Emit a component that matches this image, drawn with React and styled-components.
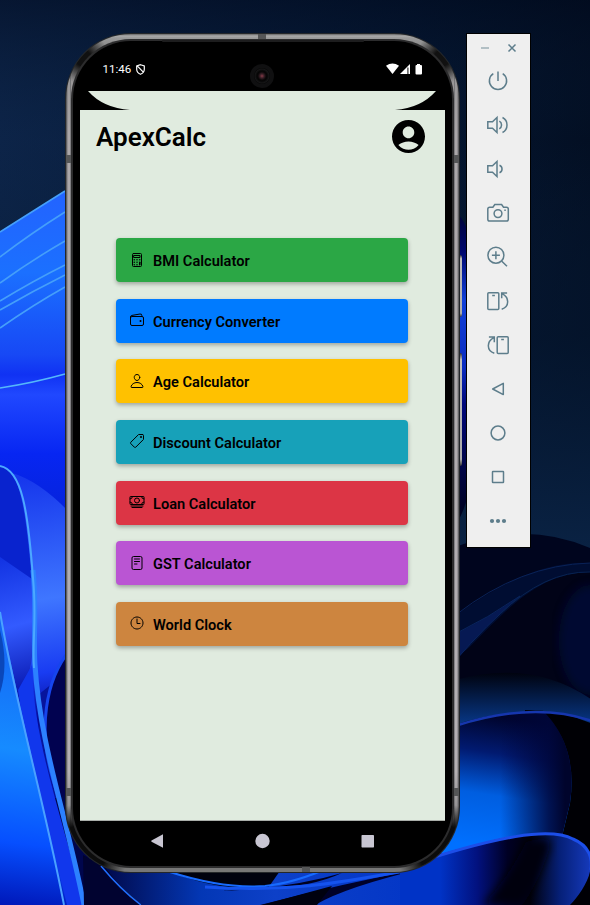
import React from "react";
import styled, { createGlobalStyle } from "styled-components";
import {
  IoCalculatorOutline,
  IoWalletOutline,
  IoPersonOutline,
  IoPricetagOutline,
  IoCashOutline,
  IoReaderOutline,
  IoTimeOutline,
} from "react-icons/io5";

const GlobalStyle = createGlobalStyle`
  * { box-sizing: border-box; }
  body { margin: 0; background: #03122a; font-family: Roboto, sans-serif; overflow: hidden; }
`;

const Desktop = styled.main`
  position: relative;
  isolation: isolate;
  width: 590px;
  height: 905px;
  overflow: hidden;
  display: flex;
  align-items: flex-start;
  padding: 33px 0 0 65px;
`;

const WallpaperArt = styled.svg`
  position: absolute;
  inset: 0;
  z-index: -1;
`;

const Phone = styled.section`
  position: relative;
  width: 395px;
  height: 840px;
  padding: 1px;
  border-radius: 66px;
  background: #24272a;
`;

const Metal = styled.div`
  height: 100%;
  padding: 5px 5px 4px;
  border-radius: 65px;
  background:
    radial-gradient(circle at 17px 24px, #111 8px, transparent 26px),
    radial-gradient(circle at 376px 24px, #111 8px, transparent 26px),
    radial-gradient(circle at 14px 818px, #0c0c0c 26px, transparent 48px),
    radial-gradient(circle at 379px 818px, #0c0c0c 26px, transparent 48px),
    linear-gradient(90deg, #4a4b4e 0, #4a4b4e88 1px, transparent 2px, transparent 4px, #55575a 5px, transparent 5px, transparent 388px, #55575a 388px, transparent 389px, transparent 391px, #4a4b4e88 392px, #4a4b4e 393px),
    linear-gradient(180deg, #666 0, #aaa 2px, #999 4px, #8d8d8d 1.5%, #aaa6a8 12%, #b4b0b3 88%, #777 96%, #777 100%);
`;

const Rim = styled.div`
  height: 100%;
  padding: 2px;
  border-radius: 60px;
  background: #2c2c2d;
`;

const Bezel = styled.div`
  height: 100%;
  padding: 0 7px;
  border-radius: 58px;
  background: #000;
  display: flex;
  flex-direction: column;
`;

const Antenna = styled.i`
  position: absolute;
  background: #555657;
  width: ${(p) => (p.$flat ? "8px" : "5px")};
  height: ${(p) => (p.$flat ? "5px" : "8px")};
  left: ${(p) => p.$x}px;
  top: ${(p) => p.$y}px;
`;

const SideButton = styled.i`
  position: absolute;
  left: 395px;
  top: ${(p) => p.$y}px;
  width: 2px;
  height: ${(p) => p.$h}px;
  border-radius: 0 2px 2px 0;
  background: linear-gradient(#333, #bbb 6%, #aaa 94%, #333);
`;

const Glint = styled.i`
  position: absolute;
  left: 97px;
  top: 7px;
  width: 202px;
  height: 2px;
  border-radius: 2px;
  background: #1d1d1e;
`;

const StatusBar = styled.header`
  height: 50px;
  flex: none;
  display: grid;
  grid-template-columns: 1fr 24px 1fr;
  align-items: center;
  color: #fff;
`;

const Clock = styled.div`
  display: flex;
  align-items: center;
  gap: 5px;
  padding: 6px 0 0 22.5px;
  font-size: 11.5px;
  line-height: 14px;
`;

const Camera = styled.i`
  width: 24px;
  height: 24px;
  margin: 19px 0 0 -0.5px;
  border-radius: 50%;
  border: 4px solid #101011;
  background: radial-gradient(circle, #8a3c48 0, #3c2028 2px, #0a0809 4px, #050505 5px, #161617 7px, #070707 8px);
`;

const Signals = styled.div`
  display: flex;
  justify-content: flex-end;
  padding: 5px 22px 0 0;
`;

const Screen = styled.div`
  flex: 1;
  display: flex;
  flex-direction: column;
  background: #e0ebdf;
  border-bottom: 1px solid #a9aea9;
`;

const ScreenCorners = styled.svg`
  display: block;
  flex: none;
`;

const TitleBar = styled.div`
  display: flex;
  justify-content: space-between;
  align-items: center;
  height: 53px;
  padding: 0 20px 0 16px;
`;

const Title = styled.h1`
  margin: 0;
  font-size: 26px;
  font-weight: 600;
  line-height: 32px;
  color: #000;
`;

const Menu = styled.nav`
  display: flex;
  flex-direction: column;
  gap: 16.65px;
  padding: 75px 37px 0 36px;
`;

const MenuButton = styled.button`
  display: flex;
  align-items: center;
  gap: 8.5px;
  height: 44px;
  padding: 2px 13px 0 12.5px;
  border: 0;
  border-radius: 4px;
  background: ${(p) => p.$color};
  box-shadow: 0 2px 4px rgba(0, 0, 0, 0.3);
  color: #000;
  font: 600 14.6px/20px Roboto, sans-serif;
  text-align: left;

  svg { width: 16px; height: 16px; flex: none; margin-top: -3px; }
`;

const NavBar = styled.footer`
  height: 45px;
  flex: none;
  padding: 0 0 6px;
  display: flex;
  justify-content: center;
  align-items: center;
`;

const Toolbar = styled.aside`
  width: 65px;
  height: 515px;
  margin-left: 6px;
  background: #efefef;
  border: 1px solid #000;
  color: #5d7d8b;
`;

const WindowControls = styled.div`
  height: 25px;
  display: flex;
  align-items: center;
  justify-content: center;
  gap: 17px;
  padding: 3px 0 0;
`;

const ToolButton = styled.button`
  display: grid;
  place-items: center;
  width: 100%;
  height: 44px;
  padding: 0 1px 0 0;
  border: 0;
  background: none;
  color: inherit;
`;

const LineIcon = styled.svg.attrs({
  width: 24,
  height: 24,
  viewBox: "0 0 24 24",
  fill: "none",
  stroke: "currentColor",
  strokeWidth: 1.5,
})``;

const calculators = [
  ["BMI Calculator", "#2ba745", IoCalculatorOutline],
  ["Currency Converter", "#007bff", IoWalletOutline],
  ["Age Calculator", "#ffc100", IoPersonOutline],
  ["Discount Calculator", "#17a1b9", IoPricetagOutline],
  ["Loan Calculator", "#dc3545", IoCashOutline],
  ["GST Calculator", "#ba55d3", IoReaderOutline],
  ["World Clock", "#cd853f", IoTimeOutline],
];

const tools = [
  ["Power", <><path d="M7.3 4.7a8.6 8.6 0 1 0 9.4 0" /><path d="M12 2.5v9.5" /></>],
  ["Volume up", <><path d="M1.8 8.7h4.7L11 4.5v15l-4.5-4.2H1.8z" /><path d="M13.3 8.2c3 1.6 3 6 0 7.6M16.5 4.5c6 3 6 12 0 15" /></>],
  ["Volume down", <><path d="M1.8 8.7h4.7L11 4.5v15l-4.5-4.2H1.8z" /><path d="M13.5 8.2c3.4 1.6 3.4 6 0 7.6" /></>],
  ["Take screenshot", <><path d="M3.8 6.3h3.1L8.8 3.6h6.8l1.9 2.7h3q1.8 0 1.8 1.8v10.1q0 1.8-1.8 1.8H3.6q-1.8 0-1.8-1.8V8.1q0-1.8 2-1.8z" /><circle cx="12" cy="12.6" r="3.9" /><path d="M18.3 9.2h1.5" /></>],
  ["Zoom", <><circle cx="9.9" cy="10.2" r="8" /><path d="M9.9 6.2v8M5.9 10.2h8M15.8 16.2l5.2 5.1" /></>],
  ["Rotate left", <><rect x="1.8" y="3.7" width="11" height="16.8" rx="1" /><path d="M6.2 6.5h2.7M15.7 20.3c8-2.6 7.8-12 .4-15.7M15.7 9.2V4.1h5.4" /></>],
  ["Rotate right", <><rect x="11.2" y="3.7" width="11" height="16.8" rx="1" /><path d="M15.2 6.5h2.7M8.3 20.3C.3 17.7.5 8.3 7.9 4.6M2.900 4.1h5.4v5.1" /></>],
  ["Back", <path d="M17.3 6.3v11.3L6.7 12z" strokeLinejoin="round" />],
  ["Home", <circle cx="12" cy="12" r="6.9" />],
  ["Overview", <rect x="6.5" y="6.5" width="11" height="11" rx=".5" />],
  ["More", <g fill="currentColor" stroke="none"><circle cx="6" cy="12" r="2.1" /><circle cx="12" cy="12" r="2.1" /><circle cx="18" cy="12" r="2.1" /></g>],
];

function Wallpaper() {
  return (
    <WallpaperArt width="590" height="905" viewBox="0 0 590 905" fill="none" aria-hidden="true">
      <defs>
        <linearGradient id="sky" x1="0" y1="0" x2="1" y2="0">
          <stop stopColor="#0d2449" /><stop offset=".7" stopColor="#03132c" /><stop offset="1" stopColor="#010a1b" />
        </linearGradient>
        <linearGradient id="skyFade" x1="0" y1="0" x2="0" y2="1">
          <stop stopColor="#020d22" stopOpacity=".6" /><stop offset=".25" stopColor="#0b2444" stopOpacity=".2" /><stop offset=".6" stopColor="#061a35" stopOpacity=".6" /><stop offset="1" stopColor="#0a2345" />
        </linearGradient>
        <linearGradient id="petal" x1="0" y1="190" x2="0" y2="520" gradientUnits="userSpaceOnUse">
          <stop stopColor="#2363ff" /><stop offset=".25" stopColor="#1b70ff" /><stop offset=".5" stopColor="#1748f5" /><stop offset=".56" stopColor="#1032f3" /><stop offset=".62" stopColor="#2048ff" /><stop offset=".8" stopColor="#0726f2" /><stop offset="1" stopColor="#0522d8" />
        </linearGradient>
        <linearGradient id="fold" x1="20" y1="480" x2="55" y2="720" gradientUnits="userSpaceOnUse">
          <stop stopColor="#1738ed" /><stop offset=".5" stopColor="#3f76ff" /><stop offset=".8" stopColor="#193cf2" /><stop offset="1" stopColor="#040793" />
        </linearGradient>
        <linearGradient id="inner" x1="0" y1="560" x2="35" y2="690" gradientUnits="userSpaceOnUse">
          <stop stopColor="#1334e3" /><stop offset=".5" stopColor="#335bff" /><stop offset="1" stopColor="#0715ad" />
        </linearGradient>
        <linearGradient id="front" x1="0" y1="640" x2="-30" y2="905" gradientUnits="userSpaceOnUse">
          <stop stopColor="#1467f5" /><stop offset=".4" stopColor="#168bff" /><stop offset=".75" stopColor="#064fff" /><stop offset="1" stopColor="#0015b5" />
        </linearGradient>
        <linearGradient id="floor" x1="90" y1="0" x2="460" y2="0" gradientUnits="userSpaceOnUse">
          <stop stopColor="#01033b" /><stop offset=".3" stopColor="#0337b5" /><stop offset=".5" stopColor="#0d40c8" /><stop offset="1" stopColor="#0033c6" />
        </linearGradient>
        <linearGradient id="band" x1="0" y1="672" x2="0" y2="722" gradientUnits="userSpaceOnUse">
          <stop stopColor="#00020d" /><stop offset="1" stopColor="#073581" />
        </linearGradient>
        <linearGradient id="gap" x1="0" y1="215" x2="0" y2="520" gradientUnits="userSpaceOnUse">
          <stop stopColor="#00043a" /><stop offset=".12" stopColor="#00086e" /><stop offset=".28" stopColor="#1040d8" /><stop offset=".5" stopColor="#0a2cc0" /><stop offset=".62" stopColor="#00087a" /><stop offset="1" stopColor="#00021c" />
        </linearGradient>
        <linearGradient id="glow" x1="470" y1="845" x2="490" y2="715" gradientUnits="userSpaceOnUse">
          <stop stopColor="#0070ff" /><stop offset=".4" stopColor="#005ee0" /><stop offset=".72" stopColor="#011a70" /><stop offset="1" stopColor="#00042c" />
        </linearGradient>
        <linearGradient id="glowShade" x1="500" y1="0" x2="565" y2="0" gradientUnits="userSpaceOnUse">
          <stop stopColor="#000640" stopOpacity="0" /><stop offset=".75" stopColor="#00063a" stopOpacity=".85" /><stop offset="1" stopColor="#00042c" />
        </linearGradient>
        <linearGradient id="hem" x1="440" y1="0" x2="590" y2="0" gradientUnits="userSpaceOnUse">
          <stop stopColor="#0033c6" /><stop offset=".25" stopColor="#02117e" /><stop offset=".45" stopColor="#000024" /><stop offset=".6" stopColor="#00000c" /><stop offset=".8" stopColor="#062078" /><stop offset="1" stopColor="#1539ba" />
        </linearGradient>
        <filter id="soft"><feGaussianBlur stdDeviation="5" /></filter>
      </defs>
      <path fill="url(#sky)" d="M0 0h590v905H0z" />
      <path fill="url(#skyFade)" d="M0 0h590v560H0z" />

      <path fill="url(#petal)" d="M0 232L65 191h30v500H0z" />
      <g stroke="#459ffa" strokeWidth="1.6">
        <path d="M0 232Q30 213 65 191M0 257Q30 234 65 212M0 283Q32 260 65 241M0 301Q33 281 65 265M0 310Q33 291 65 275M0 328Q33 305 65 287" />
        <path stroke="#55b8fa" d="M0 388Q33 383 65 374" />
      </g>
      <path fill="url(#fold)" d="M12 473q28 8 60 42v250H20z" />
      <path fill="#0923ce" d="M0 466c18 3 25 32 32 115L0 558z" />
      <path fill="url(#inner)" d="M0 557l32 22q6 70-6 105l-10 50-16 0z" />
      <path fill="#07149c" d="M38 695Q54 682 72 668v200H42z" />
      <path fill="#010250" stroke="#1645ed" strokeWidth="3" d="M70 650C45 680 38 730 53 780L75 850h30V650z" />
      <path fill="#00064d" d="M50 800l30-10 15 115H60z" />
      <path fill="#1137ec" d="M32 665c2 80 30 150 52 240H48L18 690z" />
      <path stroke="#2c81ff" strokeWidth="5" d="M33 570c4 40 0 65 2 95 5 80 30 145 49 240" />
      <path stroke="#4ca9ff" strokeWidth="2" d="M0 466c22 4 28 45 33 112 4 40-1 65 1 90" />
      <path fill="url(#front)" d="M0 610c16 80 35 165 67 295H0z" />
      <path stroke="#4aa1ff" strokeWidth="2" d="M0 612c15 90 42 180 64 293" />
      <path fill="#0a47ba" d="M0 630q9 35 0 63z" />

      <path fill="url(#floor)" d="M85 850h400v55H142Q126 891 106 873z" />
      <path fill="#010330" d="M83 855l22 12q18 25 37 38H84z" />
      <path stroke="#206eff" strokeWidth="1.5" d="M101 866Q121 890 141 905" />
      <path fill="#00010e" d="M160 868q57 24 108 20l14-20z" />
      <path stroke="#176bff" strokeWidth="2" d="M170 872q53 17 95 14 30-3 68-20" />
      <path fill="#00011f" d="M222 891q70-3 120-18-35 16-82 14z" />
      <path fill="#000128" d="M260 905Q345 883 425 868q-80 19-110 37z" />
      <path stroke="#1553ee" strokeWidth="3" d="M205 887c90 6 138-5 227-21" />
      <path fill="#00010f" d="M262 905l70-19-15 19z" />

      <path fill="url(#gap)" d="M458 215q6 4 10 18v262q-4 16-10 26z" />
      <path fill="#00051e" d="M455 547Q525 520 590 548v170H455z" />
      <path fill="#000d32" d="M455 616Q530 560 590 563v60q-60-22-135 35z" />
      <path stroke="#092257" d="M457 614Q520 565 590 563" />
      <path fill="#061953" stroke="#09245d" d="M455 634Q488 618 520 596q-34 29-65 65z" />
      <path fill="#010317" d="M455 662C505 612 534 574 590 572v128H455z" />
      <path stroke="#082352" d="M500 614Q545 571 590 572" />
      <ellipse cx="591" cy="640" rx="32" ry="55" fill="#021040" opacity=".65" filter="url(#soft)" />
      <path fill="url(#band)" d="M455 680q80-22 140 22v25q-75-26-140-2z" />
      <path fill="#000005" d="M525 710q38 0 70 15v180h-70z" />
      <path fill="url(#glow)" d="M440 732q60-20 105-19 33 35 25 90l-12 50H440z" />
      <path fill="url(#glowShade)" d="M500 714q28-3 45-1 33 35 25 90l-12 50H500z" />
      <path stroke="#1636ae" strokeWidth="2.5" d="M455 726q80-26 140-4" />
      <path fill="url(#hem)" d="M400 866C500 836 548 825 573 839c33 17 13 49-3 66H400z" />
      <path fill="#00000e" d="M526 842q26-8 24 5-12 37-28 58h-39q26-28 43-63z" filter="url(#soft)" />
      <path stroke="#1c4ee8" strokeWidth="3" d="M400 868C500 835 550 827 573 839q21 9 18 31" />
    </WallpaperArt>
  );
}

export default function App() {
  return (
    <Desktop>
      <GlobalStyle />
      <Wallpaper />
      <Phone>
        <Metal>
          <Rim>
            <Bezel>
              <StatusBar>
                <Clock>
                  11:46
                  <svg width="9" height="11" viewBox="0 0 9 11" fill="none" stroke="#fff" strokeWidth="1.2">
                    <path d="M4.5.7L8.3 2v3.3c0 2.5-1.5 4.1-3.8 5C2.2 9.400.7 7.800.7 5.300V2zM1.500 2.200l5.800 6" />
                  </svg>
                </Clock>
                <Camera />
                <Signals>
                  <svg width="37" height="12" viewBox="0 0 37 12" fill="#fff">
                    <path d="M0 2.700Q6.500-1.700 13 2.700L6.500 11z" />
                    <path d="M14 11L24 1v10z" />
                    <path d="M21.300 4.500h1.200V11h-1.200z" fill="#333" />
                    <path d="M31 1h3v1h1q1 0 1 1v7.500q0 1-1 1h-4.500q-1 0-1-1V3q0-1 1-1h.5z" />
                  </svg>
                </Signals>
              </StatusBar>
              <Screen>
                <ScreenCorners width="365" height="19" viewBox="0 0 365 19">
                  <path d="M0 0h8Q23 17 50 19H0zM365 0h-9q-15 17-41 19h50z" />
                </ScreenCorners>
                <TitleBar>
                  <Title>ApexCalc</Title>
                  <svg width="33" height="33" viewBox="2 2 20 20">
                    <path d="M12 2C6.480 2 2 6.480 2 12s4.480 10 10 10 10-4.480 10-10S17.520 2 12 2zm0 4c1.930 0 3.500 1.570 3.500 3.500S13.930 13 12 13s-3.500-1.570-3.500-3.500S10.070 6 12 6zm0 14c-2.030 0-4.430-.82-6.140-2.880C7.550 15.800 9.680 15 12 15s4.450.8 6.140 2.120C16.430 19.180 14.030 20 12 20z" />
                  </svg>
                </TitleBar>
                <Menu>
                  {calculators.map(([label, color, Icon]) => (
                    <MenuButton key={label} $color={color}>
                      <Icon />
                      {label}
                    </MenuButton>
                  ))}
                </Menu>
              </Screen>
              <NavBar>
                <svg width="226" height="16" viewBox="0 0 226 16" fill="#c8c6d2">
                  <path d="M1.500 7.500L13 1.300v13.400L2 9Q.5 8.200 1.500 7.500z" />
                  <circle cx="112.500" cy="8" r="7.200" />
                  <rect x="211.500" y="2" width="12.500" height="12.500" rx=".7" />
                </svg>
              </NavBar>
            </Bezel>
          </Rim>
        </Metal>
        <Glint />
        <Antenna $flat $x={193} $y={1} />
        <Antenna $flat $x={237} $y={834} />
        <Antenna $x={1} $y={122} />
        <Antenna $x={1} $y={755} />
        <Antenna $x={389} $y={122} />
        <Antenna $x={389} $y={755} />
        <SideButton $y={222} $h={62} />
        <SideButton $y={320} $h={113} />
      </Phone>
      <Toolbar>
        <WindowControls>
          <svg width="10" height="10" viewBox="0 0 10 10" stroke="#9eafb6" strokeWidth="1.5"><path d="M1 5h8" /></svg>
          <svg width="10" height="10" viewBox="0 0 10 10" stroke="currentColor" strokeWidth="1.5"><path d="M1.500 1.500l7 7M8.500 1.500l-7 7" /></svg>
        </WindowControls>
        {tools.map(([name, art]) => (
          <ToolButton key={name} aria-label={name}>
            <LineIcon>{art}</LineIcon>
          </ToolButton>
        ))}
      </Toolbar>
    </Desktop>
  );
}
